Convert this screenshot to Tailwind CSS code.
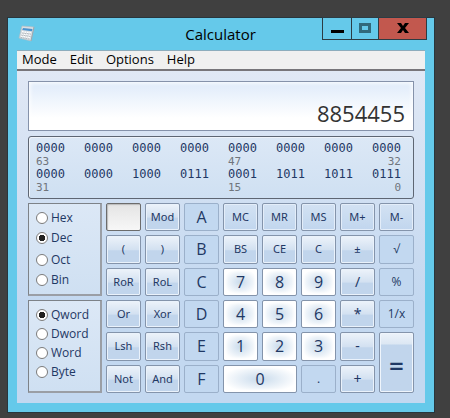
<!DOCTYPE html>
<html lang="en">
<head>
<meta charset="utf-8">
<meta name="viewport" content="width=device-width, initial-scale=1">
<title>Calculator</title>
<script src="https://cdn.jsdelivr.net/npm/@tailwindcss/browser@4"></script>
</head>
<body class="min-h-screen bg-[#404040] pt-[17px] pr-[15px] pb-[5px] pl-[7px] font-['Noto_Sans','Open_Sans',sans-serif] text-[#1f3864]">
<main class="border border-[#28363d] bg-[#65c9ea]">
  <header class="grid h-8 grid-cols-[1fr_auto_1fr] pr-[7px] pl-[10px] text-black">
    <svg class="mt-[7px] h-[18px] w-[18px]" viewBox="0 0 18 18" aria-hidden="true">
      <path d="M4 1 L16 2 L13 16 L1 13 Z" fill="#d9dee2" stroke="#aebdc6" stroke-width=".7"/>
      <path d="M5 3 L14.5 4 L14 6.2 L4.2 5 Z" fill="#4b93cf"/>
      <path d="M4 6.8 L13.6 8 M3.4 9 L13.1 10.3 M2.9 11.1 L12.6 12.6" stroke="#fff" stroke-width="1.4" stroke-dasharray="1.6 .9"/>
      <path d="M4 8 L13.4 9.2 M3.3 10.1 L12.9 11.5 M2.6 12.4 L12.2 14.3" stroke="#a5acb2" stroke-width=".8" stroke-dasharray="1.6 .9"/>
      <path d="M16 2 L13 16" stroke="#9aa8b0" stroke-width="1"/>
    </svg>
    <h1 class="pr-1 font-['Open_Sans',sans-serif] text-[15px] leading-8">Calculator</h1>
    <div class="-mt-px flex h-[23px] justify-self-end border border-[#2c3c44]">
      <button type="button" aria-label="Minimize" class="flex w-[29px] items-center justify-center border-r border-[#2c3c44]"><svg class="mt-[5px]" width="13" height="3" aria-hidden="true"><rect width="13" height="3"/></svg></button>
      <button type="button" aria-label="Maximize" class="flex w-[27px] items-center justify-center border-r border-[#2c3c44]" disabled><svg class="-mt-px" width="12" height="10" aria-hidden="true"><path d="M0 0H12V10H0ZM3 3V7H9V3Z" fill="#31697b" fill-rule="evenodd"/></svg></button>
      <button type="button" aria-label="Close" class="flex w-[47px] items-center justify-center bg-[#c2584e]"><svg class="-mt-px" width="12" height="10" aria-hidden="true"><path d="M0 0H4L6 3L8 0H12L8 5L12 10H8L6 7L4 10H0L4 5Z"/></svg></button>
    </div>
  </header>
  <div class="mx-[9px] mb-[9px] border-t border-[#8dadbd]">
    <nav class="flex h-5 items-center gap-[13px] border-b-2 border-[#77757a] bg-[#f0f0f0] px-[5px] pb-[2px] text-[13px] leading-4 font-['Open_Sans',sans-serif] text-black">
      <a href="#">Mode</a><a href="#">Edit</a><a href="#">Options</a><a href="#">Help</a>
    </nav>
    <div class="bg-linear-to-b from-[#e0e8f5] to-[#c3d8f0] to-70% px-[11px] py-[10px]">
      <input aria-label="Result" readonly value="8854455" class="block h-[50px] w-full border border-[#8592aa] bg-linear-to-b from-[#dfebfa] to-white to-75% pt-[13px] pr-2 text-right font-['Open_Sans',sans-serif] text-[22px] leading-6 text-[#333] shadow-[inset_0_0_4px_1px_#fff] outline-none">
      <section aria-label="Binary value" class="mt-[5px] mb-1 rounded-[3px] border border-[#5e6673] bg-linear-to-b from-[#dce8f6] to-[#cfe0f2] pt-[5px] pr-[12px] pb-1 pl-[7px] font-['DejaVu_Sans_Mono','Liberation_Mono',monospace] text-[12px] leading-[13px] shadow-[inset_1px_1px_0_#eef3fa]">
        <div class="flex justify-between"><span class="w-[29px]">0000</span><span class="w-[29px]">0000</span><span class="w-[29px]">0000</span><span class="w-[29px]">0000</span><span class="w-[29px]">0000</span><span class="w-[29px]">0000</span><span class="w-[29px]">0000</span><span class="w-[29px]">0000</span></div>
        <div class="flex justify-between text-[11px] text-[#70757c]"><span class="w-[29px]">63</span><span class="w-[29px]"></span><span class="w-[29px]"></span><span class="w-[29px]"></span><span class="w-[29px]">47</span><span class="w-[29px]"></span><span class="w-[29px]"></span><span class="w-[29px] text-right">32</span></div>
        <div class="flex justify-between"><span class="w-[29px]">0000</span><span class="w-[29px]">0000</span><span class="w-[29px]">1000</span><span class="w-[29px]">0111</span><span class="w-[29px]">0001</span><span class="w-[29px]">1011</span><span class="w-[29px]">1011</span><span class="w-[29px]">0111</span></div>
        <div class="flex justify-between text-[11px] text-[#70757c]"><span class="w-[29px]">31</span><span class="w-[29px]"></span><span class="w-[29px]"></span><span class="w-[29px]"></span><span class="w-[29px]">15</span><span class="w-[29px]"></span><span class="w-[29px]"></span><span class="w-[29px] text-right">0</span></div>
      </section>
      <div class="flex gap-1">
        <div class="flex w-[74px] flex-col gap-1 font-['Open_Sans',sans-serif] text-[12px] leading-5">
          <fieldset class="flex flex-1 flex-col gap-[2px] border border-r-2 border-b-2 border-[#7d8288] border-r-[#9a9ea5] border-b-[#9a9ea5] bg-linear-to-b from-[#dce8f6] to-[#cfe0f2] pt-1 pl-[7px]">
            <div>
              <label class="flex items-center gap-[3px]"><input type="radio" name="base" class="size-3 shrink-0 appearance-none rounded-full border border-[#7b7b7b] bg-white checked:bg-radial checked:from-[#222] checked:from-42% checked:to-white checked:to-50%">Hex</label>
              <label class="flex items-center gap-[3px]"><input type="radio" name="base" checked class="size-3 shrink-0 appearance-none rounded-full border border-[#7b7b7b] bg-white checked:bg-radial checked:from-[#222] checked:from-42% checked:to-white checked:to-50%">Dec</label>
            </div>
            <div>
              <label class="flex items-center gap-[3px]"><input type="radio" name="base" class="size-3 shrink-0 appearance-none rounded-full border border-[#7b7b7b] bg-white checked:bg-radial checked:from-[#222] checked:from-42% checked:to-white checked:to-50%">Oct</label>
              <label class="flex items-center gap-[3px]"><input type="radio" name="base" class="size-3 shrink-0 appearance-none rounded-full border border-[#7b7b7b] bg-white checked:bg-radial checked:from-[#222] checked:from-42% checked:to-white checked:to-50%">Bin</label>
            </div>
          </fieldset>
          <fieldset class="flex-1 border border-r-2 border-b-2 border-[#7d8288] border-r-[#9a9ea5] border-b-[#9a9ea5] bg-linear-to-b from-[#dce8f6] to-[#cfe0f2] pt-1 pl-[7px] leading-[19px]">
            <label class="flex items-center gap-[3px]"><input type="radio" name="size" checked class="size-3 shrink-0 appearance-none rounded-full border border-[#7b7b7b] bg-white checked:bg-radial checked:from-[#222] checked:from-42% checked:to-white checked:to-50%">Qword</label>
            <label class="flex items-center gap-[3px]"><input type="radio" name="size" class="size-3 shrink-0 appearance-none rounded-full border border-[#7b7b7b] bg-white checked:bg-radial checked:from-[#222] checked:from-42% checked:to-white checked:to-50%">Dword</label>
            <label class="flex items-center gap-[3px]"><input type="radio" name="size" class="size-3 shrink-0 appearance-none rounded-full border border-[#7b7b7b] bg-white checked:bg-radial checked:from-[#222] checked:from-42% checked:to-white checked:to-50%">Word</label>
            <label class="flex items-center gap-[3px]"><input type="radio" name="size" class="size-3 shrink-0 appearance-none rounded-full border border-[#7b7b7b] bg-white checked:bg-radial checked:from-[#222] checked:from-42% checked:to-white checked:to-50%">Byte</label>
          </fieldset>
        </div>
        <div id="keys" class="grid min-h-[190px] flex-1 grid-cols-8 grid-rows-6 gap-1"></div>
      </div>
    </div>
  </div>
</main>
<script>
const base = 'min-w-0 rounded-[2px] border text-center leading-4 ';
const styles = {
  op: base + 'border-[#8494ab] bg-linear-to-b from-[#edf3fa] from-0% via-[#d3e1f1] via-50% to-[#c1d5ec] to-55% text-[11px] shadow-[inset_0_0_0_1px_#eaf2fb]',
  sign: base + 'border-[#8494ab] bg-linear-to-b from-[#edf3fa] from-0% via-[#d3e1f1] via-50% to-[#c1d5ec] to-55% text-[14px] shadow-[inset_0_0_0_1px_#eaf2fb]',
  mem: base + 'border-[#8494ab] bg-linear-to-b from-[#d3e2f3] to-[#c1d6ee] text-[11px] shadow-[inset_0_0_0_1px_#e3edf9]',
  num: base + "border-[#8494ab] bg-radial from-[#c9dbec] to-white to-75% font-['Open_Sans',sans-serif] text-[16px] shadow-[inset_0_0_3px_2px_#fff]",
  hex: base + "border-[#9bb0ca] bg-[#c2d8f0] font-['Open_Sans',sans-serif] text-[16px]",
  off: base + "border-[#9bb0ca] bg-[#c2d8f0] font-['Open_Sans',sans-serif] text-[12px]",
  blank: base + 'border-[#6c6c6c] bg-linear-to-b from-[#e4e4e4] to-[#f7f7f7] shadow-[inset_1px_1px_1px_#bbb]',
  zero: base + "col-span-2 border-[#8494ab] bg-radial from-[#c9dbec] to-white to-75% font-['Open_Sans',sans-serif] text-[16px] shadow-[inset_0_0_3px_2px_#fff]",
  equals: base + "row-span-2 border-[#8494ab] bg-linear-to-b from-[#edf3fa] from-0% via-[#dce7f3] via-19% to-[#c1d5ec] to-20% pt-1 font-['Open_Sans',sans-serif] text-[26px] font-semibold shadow-[inset_0_0_0_1px_#eff5fc]"
};
const keys = [
  ['', 'blank'], ['Mod', 'op'], ['A', 'hex'], ['MC', 'mem'], ['MR', 'mem'], ['MS', 'mem'], ['M+', 'mem'], ['M-', 'mem'],
  ['(', 'op'], [')', 'op'], ['B', 'hex'], ['BS', 'op'], ['CE', 'op'], ['C', 'op'], ['±', 'op'], ['√', 'off'],
  ['RoR', 'op'], ['RoL', 'op'], ['C', 'hex'], ['7', 'num'], ['8', 'num'], ['9', 'num'], ['/', 'sign'], ['%', 'off'],
  ['Or', 'op'], ['Xor', 'op'], ['D', 'hex'], ['4', 'num'], ['5', 'num'], ['6', 'num'], ['*', 'sign'], ['1/x', 'off'],
  ['Lsh', 'op'], ['Rsh', 'op'], ['E', 'hex'], ['1', 'num'], ['2', 'num'], ['3', 'num'], ['-', 'sign'], ['=', 'equals'],
  ['Not', 'op'], ['And', 'op'], ['F', 'hex'], ['0', 'zero'], ['.', 'off'], ['+', 'sign']
];
const grid = document.getElementById('keys');
for (const [label, kind] of keys) {
  const b = document.createElement('button');
  b.type = 'button';
  b.className = styles[kind];
  b.textContent = label;
  if (!label) b.setAttribute('aria-label', 'Unassigned');
  grid.append(b);
}
</script>
</body>
</html>
